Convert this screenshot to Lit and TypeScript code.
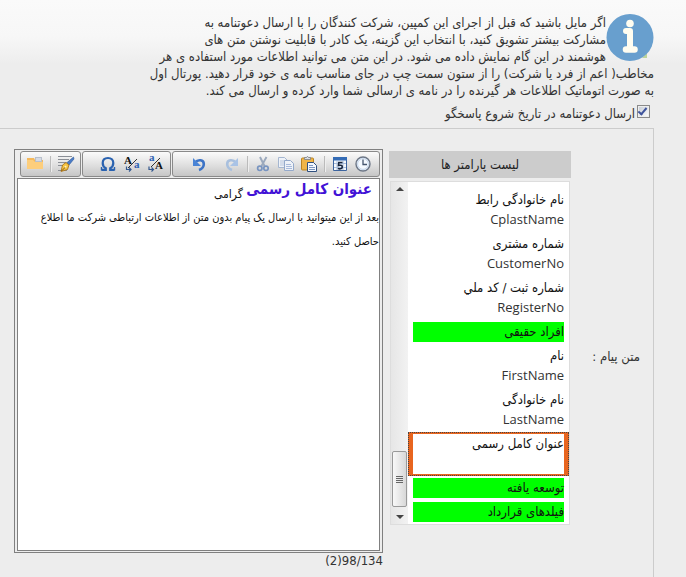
import { LitElement, html, css, svg } from "lit";
import { customElement, property } from "lit/decorators.js";
import { classMap } from "lit/directives/class-map.js";

interface Param {
  title: string;
  code?: string;
  kind?: "group" | "selected";
}

const PARAMS: Param[] = [
  { title: "نام خانوادگی رابط", code: "CplastName" },
  { title: "شماره مشتری", code: "CustomerNo" },
  { title: "شماره ثبت / کد ملي", code: "RegisterNo" },
  { title: "افراد حقیقی", kind: "group" },
  { title: "نام", code: "FirstName" },
  { title: "نام خانوادگی", code: "LastName" },
  { title: "عنوان کامل رسمی", kind: "selected" },
  { title: "توسعه یافته", kind: "group" },
  { title: "فیلدهای قرارداد", kind: "group" },
];

const ICONS: Record<string, unknown> = {
  folder: svg`<path d="M0 2h7l1 2h8v9H0z" fill="#f5b95c"/><path d="M8 1h7v6H8z" fill="#b9c0cc"/><path d="M9 2h5v3H9z" fill="#d6dbe4"/><path d="M0 4h6l2 2h8v7H0z" fill="#fdce7c"/>`,
  edit: svg`<path d="M0 .5h14M0 3.500h11M0 6.500h8M0 9.500h5M0 14.500h9" stroke="#8b8f96" fill="none"/><path d="M15.500 1l.5 2-5 6-2.500-2z" fill="#4a7cc8" stroke="#2c5797" stroke-width=".6"/><path d="M8 6.500l3 2.500-1.500 4.500L3 15.500 4.500 9z" fill="#f6c544" stroke="#a36c12" stroke-width=".8"/><path d="M3.500 15l4-4" stroke="#7a4b0b" stroke-width=".9"/><circle cx="7.500" cy="10.800" r="1" fill="#fff3c0"/>`,
  omega: svg`<path d="M1.500 13.800h4.300v-1.600C3.500 11 2.700 9 2.700 7 2.700 3.800 4.800 2 8 2s5.300 1.800 5.300 5c0 2-.8 4-3.100 5.200v1.600h4.300" fill="none" stroke="#2a62b0" stroke-width="2.200"/><path d="M1.500 11v3.500M14.500 11v3.500" stroke="#2a62b0" stroke-width="1.400"/>`,
  lower: svg`<text x="0" y="8" class="glyph dark">A</text><text x="10" y="12" class="glyph blue">a</text><path d="M4 12L13 3" stroke="#333"/><path d="M2.500 10.500v3h4M5 11.500l2 2-2 2" fill="none" stroke="#34588e" stroke-width="1.200"/>`,
  upper: svg`<text x="1" y="5" class="glyph blue">a</text><text x="7" y="13" class="glyph dark">A</text><path d="M3 11L12 2" stroke="#333"/><path d="M1 10.500v3h4M3.500 11.500l2 2-2 2" fill="none" stroke="#34588e" stroke-width="1.200"/>`,
  undo: svg`<path d="M4 6.500C7 3 12.800 3.500 12.800 8c0 3-1.800 5-4.800 6" fill="none" stroke="#3d74c6" stroke-width="2.600"/><path d="M2 2v8h8z" fill="#4a84d6"/>`,
  redo: svg`<path d="M12 6.500C9 3 3.200 3.500 3.200 8c0 3 1.800 5 4.800 6" fill="none" stroke="#a9c0de" stroke-width="2.600"/><path d="M14 2v8H6z" fill="#a9c3e6"/>`,
  cut: svg`<path d="M5 1l4.500 9M11.500 1L6.500 10" stroke="#9ba9bd" stroke-width="1.900"/><circle cx="4.800" cy="12.300" r="2.200" fill="none" stroke="#7894c0" stroke-width="1.700"/><circle cx="11" cy="12.300" r="2.200" fill="none" stroke="#7894c0" stroke-width="1.700"/>`,
  copy: svg`<path d="M.5 1.500h6l2.500 2.500v7.500H.5z" fill="#eef2f8" stroke="#a5b6d0"/><path d="M2 5h5M2 7h5M2 9h5" stroke="#b8c6dc"/><path d="M6.500 4.500h6l3 3v7h-9z" fill="#eef2f8" stroke="#94a9ca"/><path d="M8 8.500h5M8 10.500h6M8 12.500h6" stroke="#a8badb"/>`,
  paste: svg`<rect x=".5" y="2" width="12" height="12" rx="1" fill="#f0b548" stroke="#b98322"/><path d="M3.500 3.500V1.500h2L6.500.3l1 1.200h2v2z" fill="#d9dde4" stroke="#777d88" stroke-width=".8"/><path d="M6.500 6.500h6l3 3v6h-9z" fill="#f4f8ff" stroke="#30507f"/><path d="M8 9.500h4M8 11.500h6M8 13.500h6" stroke="#7d97c0"/>`,
  calendar: svg`<path d="M1.500 1.500h13v13h-13z" fill="#f4f8fd" stroke="#3d649e"/><path d="M1 1h14v3.500H1z" fill="#336bb5"/><path d="M2 7.500h12M2 11.500h12M5 5v9M11 5v9" stroke="#a9bedc"/><path d="M10.500 6.500H6.800L6.500 9.500c3-.8 4 .2 3.700 1.800C9.900 13 7.500 13.300 5.800 12.400" fill="none" stroke="#16243c" stroke-width="1.600"/>`,
  clock: svg`<circle cx="8" cy="8" r="7" fill="#eaf3fd" stroke="#6c7686" stroke-width="1.400"/><circle cx="8" cy="8" r="5.400" fill="#f5faff" stroke="#b9cce4" stroke-width=".8"/><path d="M8 3.500V8.500h4" fill="none" stroke="#45566f" stroke-width="1.300"/>`,
};

@customElement("tool-button")
class ToolButton extends LitElement {
  @property() icon = "";
  @property() label = "";
  static styles = css`
    :host { display: block; }
    .button { display: block; width: 16px; height: 16px; padding: 0; border: 0; background: none; }
    .icon { display: block; overflow: visible; }
    .glyph { font: bold 11px "Liberation Serif", serif; }
    .dark { fill: #111; }
    .blue { fill: #2d62b3; }
  `;
  render() {
    return html`<button class="button" type="button" aria-label=${this.label}>
      <svg class="icon" width="16" height="16" viewBox="0 0 16 16">${ICONS[this.icon]}</svg>
    </button>`;
  }
}

@customElement("message-editor")
class MessageEditor extends LitElement {
  static styles = css`
    :host { display: block; min-width: 0; }
    .frame { display: flex; flex-direction: column; box-sizing: border-box; height: 404px; padding: 1px 2px; border: 1px solid #808080; direction: ltr; }
    .toolbar { display: flex; gap: 1px; padding: 0 0 1px 3px; }
    .group { display: flex; align-items: center; gap: 7px; box-sizing: border-box; height: 26px; padding: 0 6px; border: 1px solid #8a8a8a; border-radius: 3px; background: linear-gradient(#fbfbfb, #e2e2e2 50%, #c6c6c6); }
    .case { gap: 8px; padding-left: 17px; }
    .rest { flex: 1; justify-content: flex-end; padding-right: 8px; }
    .undo { margin-right: 10px; }
    .sep { width: 1px; height: 16px; background: #bbb; box-shadow: 1px 0 #eee; }
    .body { flex: 1; box-sizing: border-box; border: 1px solid #808080; background: #fff; direction: rtl; font-size: 11px; line-height: 24px; color: #111; outline: none; overflow: hidden; }
    .line { margin: 0; }
    .first { padding-right: 7px; font-size: 12px; }
    .token { font-size: 15px; line-height: 20px; vertical-align: 4px; color: #4212d6; }
    .count { text-align: right; line-height: 16px; font-size: 13px; color: #333; direction: ltr; }
  `;
  render() {
    return html`
      <div class="frame">
        <div class="toolbar" role="toolbar" aria-label="ویرایش">
          <div class="group">
            <tool-button icon="folder" label="باز کردن"></tool-button>
            <span class="sep"></span>
            <tool-button icon="edit" label="امضا"></tool-button>
          </div>
          <div class="group case">
            <tool-button icon="omega" label="نماد"></tool-button>
            <tool-button icon="lower" label="حروف کوچک"></tool-button>
            <tool-button icon="upper" label="حروف بزرگ"></tool-button>
          </div>
          <div class="group rest">
            <tool-button class="undo" icon="undo" label="واگرد"></tool-button>
            <tool-button icon="redo" label="ازنو"></tool-button>
            <span class="sep"></span>
            <tool-button icon="cut" label="برش"></tool-button>
            <tool-button icon="copy" label="رونوشت"></tool-button>
            <tool-button icon="paste" label="چسباندن"></tool-button>
            <span class="sep"></span>
            <tool-button icon="calendar" label="تاریخ"></tool-button>
            <tool-button icon="clock" label="ساعت"></tool-button>
          </div>
        </div>
        <div class="body" contenteditable="true" role="textbox" aria-multiline="true" aria-label="متن پیام">
          <p class="line first"><b class="token">عنوان کامل رسمی</b> گرامی</p>
          <p class="line">بعد از این میتوانید با ارسال یک پیام بدون متن از اطلاعات ارتباطی شرکت ما اطلاع<br />حاصل کنید.</p>
        </div>
      </div>
      <div class="count">(2)98/134</div>
    `;
  }
}

@customElement("param-list")
class ParamList extends LitElement {
  static styles = css`
    :host { display: block; padding-top: 2px; }
    .title { margin: 0 0 3px; background: #ccc; font-size: 13px; font-weight: normal; line-height: 27px; text-align: center; color: #222; }
    .box { display: flex; flex-direction: row-reverse; box-sizing: border-box; height: 344px; margin: 0 1px; border: 1px solid #ddd; background: #fff; }
    .bar { display: flex; flex-direction: column; align-items: center; box-sizing: border-box; width: 17px; padding: 5px 1px; background: linear-gradient(90deg, #e6e6e6, #f2f2f2); }
    .arrow { width: 0; height: 0; border: 4px solid transparent; }
    .up { border-top: 0; border-bottom-color: #444; }
    .down { margin-top: 8px; border-bottom: 0; border-top-color: #444; }
    .track { flex: 1; }
    .thumb { display: flex; flex-direction: column; align-items: center; justify-content: center; gap: 1px; box-sizing: border-box; width: 15px; height: 56px; border: 1px solid #999; border-radius: 2px; background: linear-gradient(90deg, #f8f8f8, #d8d8d8); }
    .grip { width: 7px; height: 1px; background: #666; }
    .list { flex: 1; min-width: 0; display: flex; flex-direction: column; justify-content: flex-end; margin: 0; padding: 0; list-style: none; overflow: hidden; font-size: 13px; line-height: 20px; color: #111; }
    .item { box-sizing: border-box; min-height: 44px; padding: 2px 5px; }
    .group { min-height: 24px; }
    .group .name { background: #0f0; }
    .selected { padding: 1px 4px; border: 1px dotted #444; background: linear-gradient(#fff, #fff) content-box, #e8651f; }
    .name, .code { display: block; }
    .code { direction: ltr; text-align: right; font-family: "Open Sans", sans-serif; font-size: 13px; line-height: 18px; color: #333; }
  `;
  render() {
    return html`
      <h2 class="title">لیست پارامتر ها</h2>
      <div class="box">
        <div class="bar">
          <span class="arrow up"></span><span class="track"></span>
          <span class="thumb"><i class="grip"></i><i class="grip"></i><i class="grip"></i><i class="grip"></i></span>
          <span class="arrow down"></span>
        </div>
        <ul class="list" role="listbox">
          ${PARAMS.map(
            (p) => html`<li role="option" aria-selected=${p.kind === "selected"} class=${classMap({ item: true, group: p.kind === "group", selected: p.kind === "selected" })}>
              <span class="name">${p.title}</span>${p.code ? html`<span class="code">${p.code}</span>` : ""}
            </li>`
          )}
        </ul>
      </div>
    `;
  }
}

@customElement("app-root")
class AppRoot extends LitElement {
  static styles = css`
    :host { display: block; box-sizing: border-box; min-height: 100vh; padding: 14px 32px 0 0; overflow: hidden; direction: rtl; background: linear-gradient(#fafafa, #f7f7f7 36px, #ededed 64px); font-family: "DejaVu Sans Condensed", "DejaVu Sans", sans-serif; color: #333; }
    .info { float: right; display: block; width: 48px; height: 48px; }
    .intro { margin: 0; font-size: 13px; line-height: 17px; white-space: nowrap; }
    .send { display: flex; align-items: center; gap: 2px; height: 29px; padding: 0 4px 0 0; font-size: 13px; }
    .check { appearance: none; display: grid; width: 13px; height: 13px; margin: 0 0 4px; border: 1px solid #8a8a8a; background: linear-gradient(135deg, #c4cad4, #fff); box-shadow: inset 0 0 0 1px #eee; }
    .check:checked::before { content: ""; width: 3px; height: 7px; margin: 0 4px; border: solid #3f549c; border-width: 0 2px 2px 0; transform: rotate(40deg); }
    .panel { display: grid; grid-template-columns: 76px 182px minmax(0, 1fr); column-gap: 6px; padding: 20px 0 0 14px; border: solid #ccc; border-width: 1px 1px 0 0; min-height: 428px; }
    .caption { padding: 198px 13px 0 0; font-size: 13px; line-height: 20px; }
  `;
  render() {
    return html`
      <svg class="info" viewBox="0 0 48 48" aria-hidden="true">
        <path d="M36 44h5v-5z" fill="#bcd49a" />
        <circle cx="24" cy="23.500" r="23.500" fill="#689fce" />
        <circle cx="24" cy="9.500" r="3.800" fill="#fffdf0" />
        <path d="M20 17h4v17" fill="none" stroke="#fffdf0" stroke-width="6" stroke-linecap="round" stroke-linejoin="round" />
        <path d="M20 35.500h8.500" stroke="#fffdf0" stroke-width="6.500" stroke-linecap="round" />
      </svg>
      <p class="intro">
        اگر مایل باشید که قبل از اجرای این کمپین، شرکت کنندگان را با ارسال دعوتنامه به<br />
        مشارکت بیشتر تشویق کنید، با انتخاب این گزینه، یک کادر با قابلیت نوشتن متن های<br />
        هوشمند در این گام نمایش داده می شود. در این متن می توانید اطلاعات مورد استفاده ی هر<br />
        مخاطب( اعم از فرد یا شرکت) را از ستون سمت چپ در جای مناسب نامه ی خود قرار دهید. پورتال اول<br />
        به صورت اتوماتیک اطلاعات هر گیرنده را در نامه ی ارسالی شما وارد کرده و ارسال می کند.
      </p>
      <div class="send">
        <input class="check" id="send" type="checkbox" checked />
        <label for="send">ارسال دعوتنامه در تاریخ شروع پاسخگو</label>
      </div>
      <section class="panel">
        <div class="caption">متن پیام :</div>
        <param-list></param-list>
        <message-editor></message-editor>
      </section>
    `;
  }
}
